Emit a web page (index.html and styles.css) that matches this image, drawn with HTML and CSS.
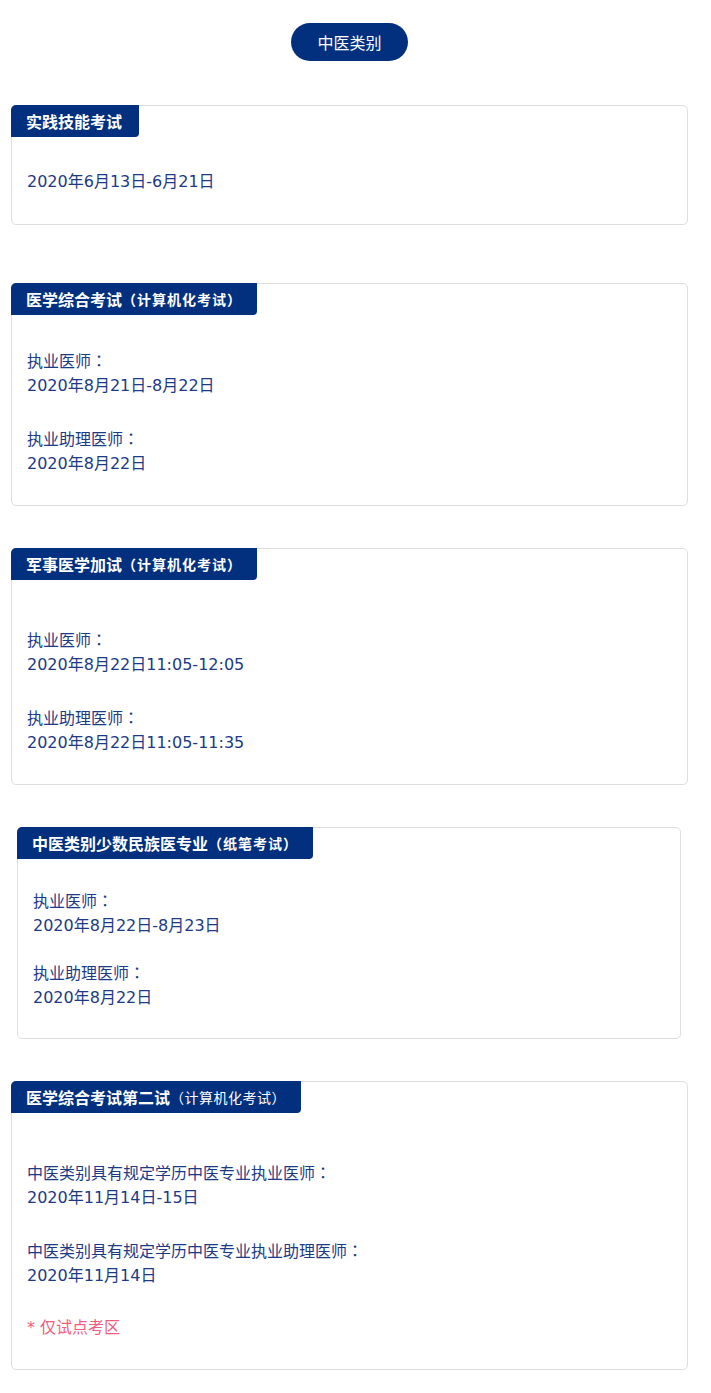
FILE: index.html
```html
<!DOCTYPE html>
<html lang="zh-CN">
<head>
<meta charset="utf-8">
<title>中医类别</title>
<link rel="stylesheet" href="styles.css">
</head>
<body>
<div class="page">
  <div class="top">
    <span class="pill">中医类别</span>
  </div>

  <section class="card card-first">
    <h3 class="tab">实践技能考试</h3>
    <div class="body">
      <p>2020年6月13日-6月21日</p>
    </div>
  </section>

  <section class="card">
    <h3 class="tab">医学综合考试<small class="bold">（计算机化考试）</small></h3>
    <div class="body">
      <p class="label">执业医师<span class="colon" lang="zh-TW">：</span></p>
      <p>2020年8月21日-8月22日</p>
      <p class="blank"></p>
      <p class="label">执业助理医师<span class="colon" lang="zh-TW">：</span></p>
      <p>2020年8月22日</p>
    </div>
  </section>

  <section class="card">
    <h3 class="tab">军事医学加试<small class="bold">（计算机化考试）</small></h3>
    <div class="body body-tall">
      <p class="label">执业医师<span class="colon" lang="zh-TW">：</span></p>
      <p>2020年8月22日11:05-12:05</p>
      <p class="blank"></p>
      <p class="label">执业助理医师<span class="colon" lang="zh-TW">：</span></p>
      <p>2020年8月22日11:05-11:35</p>
    </div>
  </section>

  <section class="card card-inset">
    <h3 class="tab">中医类别少数民族医专业<small class="bold">（纸笔考试）</small></h3>
    <div class="body body-compact">
      <p class="label">执业医师<span class="colon" lang="zh-TW">：</span></p>
      <p>2020年8月22日-8月23日</p>
      <p class="blank"></p>
      <p class="label">执业助理医师<span class="colon" lang="zh-TW">：</span></p>
      <p>2020年8月22日</p>
    </div>
  </section>

  <section class="card">
    <h3 class="tab">医学综合考试第二试<small>（计算机化考试）</small></h3>
    <div class="body body-tall">
      <p class="label">中医类别具有规定学历中医专业执业医师<span class="colon" lang="zh-TW">：</span></p>
      <p>2020年11月14日-15日</p>
      <p class="blank"></p>
      <p class="label">中医类别具有规定学历中医专业执业助理医师<span class="colon" lang="zh-TW">：</span></p>
      <p>2020年11月14日</p>
      <p class="blank"></p>
      <p class="note">* 仅试点考区</p>
    </div>
  </section>
</div>
</body>
</html>
```

FILE: styles.css
```css
* {
  box-sizing: border-box;
}

html, body {
  margin: 0;
  padding: 0;
  background: #ffffff;
}

body {
  font-family: "DejaVu Sans", "Noto Sans CJK SC", sans-serif;
  color: #1c3a86;
}

.page {
  width: 677px;
  margin-left: 11px;
  padding-top: 23px;
  padding-bottom: 25px;
}

.top {
  display: flex;
  justify-content: center;
  margin-bottom: 44px;
}

.pill {
  display: inline-flex;
  align-items: center;
  justify-content: center;
  height: 38px;
  width: 117px;
  border-radius: 19px;
  background: #02307f;
  color: #ffffff;
  font-family: "Noto Sans CJK SC", sans-serif;
  font-size: 16px;
}

.card {
  border: 1px solid #dedede;
  border-radius: 5px;
  margin-top: 42px;
  background: #fff;
}

.card-first {
  margin-top: 0;
  margin-bottom: 58px;
}

.card-first .body {
  padding-bottom: 29px;
}

.card-first + .card {
  margin-top: 0;
}

.card-inset {
  margin-left: 6px;
  margin-right: 7px;
}

.tab {
  display: flex;
  align-items: center;
  width: fit-content;
  height: 32px;
  margin: -1px 0 0 -1px;
  padding: 0 17px 0 15px;
  background: #02307f;
  color: #ffffff;
  font-family: "Noto Sans CJK SC", sans-serif;
  font-size: 16px;
  font-weight: 700;
  border-radius: 5px 0 4px 0;
  white-space: nowrap;
}

.tab small {
  font-size: 14px;
  font-weight: 400;
  letter-spacing: 0.5px;
  margin-right: -2px;
}

.tab small.bold {
  font-weight: 700;
  letter-spacing: 1px;
}

.body {
  padding: 32px 15px 28px;
}

.body-tall {
  padding-top: 46px;
}

.body-compact {
  padding-top: 29px;
}

.body p {
  margin: 0;
  font-size: 16px;
  line-height: 26px;
  height: 26px;
}

.body p.label {
  font-family: "Noto Sans CJK SC", sans-serif;
}

.colon {
  font-family: "Noto Sans CJK TC", "Noto Sans CJK JP", sans-serif;
}

.body-compact p {
  line-height: 25px;
  height: 25px;
}

.body-compact p.blank {
  height: 22px;
}

.note {
  color: #f35b7e;
}
```
